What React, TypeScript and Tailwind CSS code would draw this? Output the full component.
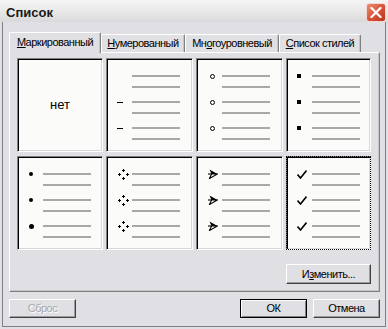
import React from "react";

const LINE = "h-[2px] w-[48px] bg-[#a8a8a8]";

const Dash = () => <div className="w-[6px] h-px bg-black" />;
const Ring = () => <div className="w-[5px] h-[5px] rounded-full border border-black" />;
const Square = () => <div className="w-[4px] h-[4px] bg-black" />;
const Dot = ({ big }: { big?: boolean }) => (
    <div className={big ? "w-[5px] h-[5px] rounded-full bg-black" : "w-[4px] h-[4px] rounded-full bg-black"} />
);

const Diamonds = () => (
    <svg width="11" height="11" viewBox="0 0 11 11" shapeRendering="crispEdges">
        <rect x="5" y="0" width="1" height="3" fill="black" />
        <rect x="4" y="1" width="3" height="1" fill="black" />
        <rect x="5" y="8" width="1" height="3" fill="black" />
        <rect x="4" y="9" width="3" height="1" fill="black" />
        <rect x="0" y="5" width="3" height="1" fill="black" />
        <rect x="1" y="4" width="1" height="3" fill="black" />
        <rect x="8" y="5" width="3" height="1" fill="black" />
        <rect x="9" y="4" width="1" height="3" fill="black" />
    </svg>
);

const Arrow = () => (
    <svg width="10" height="10" viewBox="0 0 10 10">
        <path d="M1.5 0.5 L9.5 5 L3.5 5 Z" fill="black" />
        <path d="M3.5 5 L9.5 5 L1.5 9.5 Z" fill="white" stroke="black" strokeWidth="1.1" />
        <path d="M0 5 H4" stroke="black" strokeWidth="1.1" />
    </svg>
);

const Check = () => (
    <svg width="10" height="9" viewBox="0 0 10 9">
        <path d="M0.5 4.5 L3.5 8 L9.5 0.5" fill="none" stroke="black" strokeWidth="1.6" />
    </svg>
);

const CELL = "bg-[#fbfcf9] border border-t-[#808080] border-l-[#808080] border-r-white border-b-white shadow-[inset_1px_1px_0_#000,inset_-1px_-1px_0_#d8d7dc]";

function ListCell({ pad, markers, selected }: { pad: string; markers: (React.ReactNode | null)[]; selected?: boolean }) {
    return (
        <div className={`${CELL} ${selected ? "outline-1 outline-dotted outline-black -outline-offset-1" : ""}`}>
            <div className="flex flex-col gap-[13px] pt-[16px]">
                {markers.map((m, i) => (
                    <div key={i} className="flex flex-col gap-[9px]">
                        <div className="flex items-center h-[2px]">
                            <div className={`w-[25px] shrink-0 flex items-center ${pad}`}>{m}</div>
                            <div className={LINE} />
                        </div>
                        <div className={`ml-[25px] ${LINE}`} />
                    </div>
                ))}
            </div>
        </div>
    );
}

function Btn({ children, className, disabled, isDefault }: { children: React.ReactNode; className?: string; disabled?: boolean; isDefault?: boolean }) {
    const frame = isDefault
        ? "border border-black shadow-[inset_1px_1px_0_#fff,inset_-1px_-1px_0_#808080]"
        : "border border-t-white border-l-white border-r-[#404040] border-b-[#404040] shadow-[inset_-1px_-1px_0_#9d9da1]";
    return (
        <div className={`flex items-center justify-center bg-[#e0dfe3] ${frame} ${className ?? ""}`}>
            <span className={disabled ? "text-[#a7a6aa] [text-shadow:1px_1px_0_#fff]" : "text-black"}>{children}</span>
        </div>
    );
}

export default function App() {
    const tabs = [
        { label: <><span className="underline">М</span>аркированный</>, w: "w-[92px]", active: true },
        { label: <><span className="underline">Н</span>умерованный</>, w: "w-[84px]" },
        { label: <>Мн<span className="underline">о</span>гоуровневый</>, w: "w-[94px]" },
        { label: <><span className="underline">С</span>писок стилей</>, w: "w-[82px]" },
    ];

    return (
        <div className="w-[388px] h-[329px] bg-[#e0dfe3] flex flex-col font-['Liberation_Sans',Arial,sans-serif] text-[11px] tracking-[-0.5px] text-black overflow-hidden">
            {/* Title bar */}
            <div className="h-[22px] shrink-0 flex items-center justify-between pl-[6px] pr-[2px] bg-gradient-to-b from-[#f4f4f4] via-[#e9e9e9] to-[#d9d9db]">
                <span className="text-[13px] font-bold tracking-normal text-[#1a1a1a] mt-[3px]">Список</span>
                <div className="w-[20px] h-[19px] mt-[2px] rounded-[3px] border border-[#f3d6cf] bg-gradient-to-br from-[#eb8a70] via-[#d8553a] to-[#b8361d] flex items-center justify-center">
                    <svg width="12" height="11" viewBox="0 0 12 11">
                        <path d="M1.5 1 L10.5 10 M10.5 1 L1.5 10" stroke="white" strokeWidth="2.2" strokeLinecap="square" />
                    </svg>
                </div>
            </div>

            {/* Window frame */}
            <div className="flex-1 mx-[2px] mb-[2px] border-l border-r border-b border-[#808084] flex flex-col">
                {/* Tabs */}
                <div className="flex items-end ml-[6px] mt-[10px] h-[20px]">
                    {tabs.map((t, i) => (
                        <div
                            key={i}
                            className={`${t.w} flex items-center justify-center rounded-t-[2px] border-t border-l border-white border-r border-r-[#808080] shadow-[inset_-1px_0_0_#c4c3c8] ${t.active ? "h-[21px] -mb-px relative z-10 bg-[#e0dfe3] pb-[2px]" : "h-[18px] bg-[#e0dfe3]"}`}
                        >
                            {t.label}
                        </div>
                    ))}
                </div>

                {/* Panel */}
                <div className="ml-[6px] w-[371px] h-[240px] border border-t-white border-l-white border-r-[#808080] border-b-[#808080] shadow-[inset_-1px_-1px_0_#c4c3c8] pt-[5px] pl-[7px]">
                    <div className="grid grid-cols-[86px_87px_87px_85px] grid-rows-[94px_94px] gap-x-[3px] gap-y-[4px]">
                        <div className={`${CELL} flex items-center justify-center`}>
                            <span className="text-[13px] tracking-normal">нет</span>
                        </div>
                        <ListCell pad="pl-[10px]" markers={[null, <Dash />, <Dash />]} />
                        <ListCell pad="pl-[13px]" markers={[<Ring />, <Ring />, <Ring />]} />
                        <ListCell pad="pl-[10px]" markers={[<Square />, <Square />, <Square />]} />
                        <ListCell pad="pl-[11px]" markers={[<Dot />, <Dot />, <Dot big />]} />
                        <ListCell pad="pl-[11px]" markers={[<Diamonds />, <Diamonds />, <Diamonds />]} />
                        <ListCell pad="pl-[11px]" markers={[<Arrow />, <Arrow />, <Arrow />]} />
                        <ListCell pad="pl-[10px]" markers={[<Check />, <Check />, <Check />]} selected />
                    </div>
                    <div className="flex justify-end w-[354px] mt-[14px]">
                        <Btn className="w-[85px] h-[20px]">
                            И<span className="underline">з</span>менить...
                        </Btn>
                    </div>
                </div>

                {/* Bottom buttons */}
                <div className="flex items-center ml-[6px] w-[371px] mt-[7px]">
                    <Btn className="w-[67px] h-[19px]" disabled>Сброс</Btn>
                    <div className="flex-1" />
                    <Btn className="w-[67px] h-[19px]" isDefault>ОК</Btn>
                    <Btn className="w-[67px] h-[19px] ml-[6px]">Отмена</Btn>
                </div>
            </div>
        </div>
    );
}
